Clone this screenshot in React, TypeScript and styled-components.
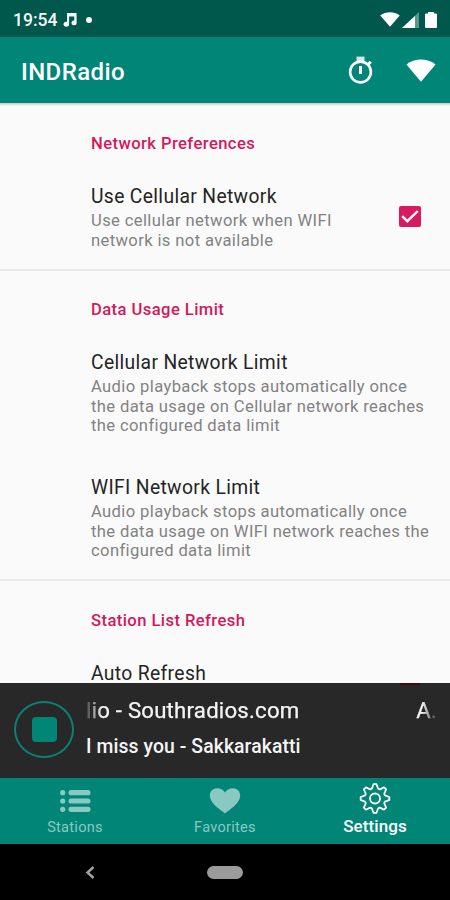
import React from "react";
import styled, { createGlobalStyle } from "styled-components";

const GlobalStyle = createGlobalStyle`
  * { box-sizing: border-box; }
  body { margin: 0; background: #000; font-family: Roboto, "Liberation Sans", sans-serif; }
`;

const Screen = styled.div`
  width: 450px;
  height: 900px;
  display: flex;
  flex-direction: column;
  overflow: hidden;
  background: #fafafa;
`;

const StatusBar = styled.header`
  height: 37px;
  flex: none;
  display: flex;
  align-items: center;
  padding: 2px 13px 0 13px;
  background: #00574b;
  color: #f4faf9;
`;

const Clock = styled.span`
  font-size: 17.5px;
  font-weight: 500;
  letter-spacing: 0;
  line-height: 20px;
  width: 50px;
`;

const StatusIcons = styled.div`
  margin-left: auto;
  display: flex;
  align-items: center;
`;

const NotificationDot = styled.span`
  width: 6px;
  height: 6px;
  margin-left: 9px;
  border-radius: 50%;
  background: #f4faf9;
`;

const AppBar = styled.div`
  height: 66px;
  flex: none;
  display: flex;
  align-items: center;
  padding: 2px 14px 0 21px;
  background: #018577;
  color: #fff;
`;

const AppTitle = styled.h1`
  margin: 0;
  flex: 1;
  padding-top: 1px;
  font-size: 24px;
  font-weight: 500;
  line-height: 30px;
  letter-spacing: 0.4px;
`;

const BarActions = styled.div`
  display: flex;
  align-items: center;
  gap: 33px;
  svg { display: block; margin-bottom: 2px; }
`;

const Preferences = styled.main`
  height: 580px;
  flex: none;
  overflow: hidden;
  background: linear-gradient(#bcc8c6, #fafafa 3px);
`;

const Section = styled.section<{ $height: number; $top?: number }>`
  height: ${(p) => p.$height}px;
  padding: ${(p) => p.$top ?? 29}px 18px 0 91px;
  border-bottom: 2px solid #e9e9e9;
`;

const SectionTitle = styled.h2`
  margin: 0 0 31px;
  font-size: 16.6px;
  font-weight: 500;
  line-height: 20px;
  letter-spacing: 0.42px;
  color: #d2195c;
`;

const Preference = styled.div`
  display: flex;
  align-items: center;
  justify-content: space-between;
  margin-bottom: 39.8px;
`;

const PreferenceTitle = styled.div`
  font-size: 19.3px;
  line-height: 24px;
  letter-spacing: 0.35px;
  color: #242424;
`;

const Summary = styled.div`
  margin-top: 2px;
  font-size: 16.6px;
  line-height: 19.7px;
  letter-spacing: 0.37px;
  color: #828282;
  white-space: nowrap;
`;

const Checkbox = styled.div`
  width: 22px;
  height: 21px;
  margin: 0 11px 2px 0;
  border-radius: 2px;
  background: #d81b60;
  display: flex;
`;

const Player = styled.section`
  height: 95px;
  flex: none;
  display: flex;
  align-items: center;
  padding: 0 0 2px 14px;
  background: #282828;
  color: #f5f5f5;
  position: relative;
`;

const CoveredCheckbox = styled.span`
  position: absolute;
  top: 0;
  left: 400px;
  width: 20px;
  height: 2px;
  background: #430612;
`;

const StopButton = styled.button`
  width: 60px;
  height: 57px;
  padding: 0;
  border: 2px solid #0b8074;
  border-radius: 50%;
  background: transparent;
  display: grid;
  place-items: center;
`;

const StopMark = styled.span`
  width: 25px;
  height: 25px;
  border-radius: 4px;
  background: #018577;
`;

const TrackInfo = styled.div`
  width: 351px;
  margin: -3px 0 0 12px;
  white-space: nowrap;
`;

const Marquee = styled.div`
  display: flex;
  justify-content: space-between;
  font-size: 22.2px;
  line-height: 28px;
  letter-spacing: 0.22px;
  -webkit-text-stroke: 0.25px currentColor;
  mask-image: linear-gradient(90deg, rgba(0, 0, 0, 0.15), #000 16px, #000 336px, rgba(0, 0, 0, 0.1));
`;

const TrackTitle = styled.div`
  margin-top: 9.5px;
  font-size: 19.4px;
  font-weight: 500;
  line-height: 26px;
  letter-spacing: 0.08px;
`;

const Tabs = styled.nav`
  height: 66px;
  flex: none;
  display: grid;
  grid-template-columns: repeat(3, 1fr);
  background: #018577;
`;

const Tab = styled.div<{ $active?: boolean }>`
  display: flex;
  flex-direction: column;
  align-items: center;
  padding-top: ${(p) => (p.$active ? 5 : 8)}px;
  color: ${(p) => (p.$active ? "#fff" : "#89c9c1")};
  svg { display: block; height: 31px; }
`;

const TabLabel = styled.span<{ $active?: boolean }>`
  font-size: ${(p) => (p.$active ? 17 : 14.5)}px;
  font-weight: ${(p) => (p.$active ? 500 : 400)};
  line-height: ${(p) => (p.$active ? 24 : 21)}px;
  letter-spacing: ${(p) => (p.$active ? 0.1 : 0.3)}px;
`;

const SystemBar = styled.footer`
  height: 56px;
  flex: none;
  display: grid;
  grid-template-columns: 180px 90px 180px;
  place-items: center;
  background: #000;
`;

const HomePill = styled.span`
  width: 36px;
  height: 13px;
  border-radius: 7px;
  background: #9b9b9b;
`;

const gearPath = () => {
  const point = (r: number, deg: number) => {
    const t = (deg * Math.PI) / 180;
    return `${(16 + r * Math.sin(t)).toFixed(2)} ${(15.5 - r * Math.cos(t)).toFixed(2)}`;
  };
  let d = "";
  for (let k = 0; k < 8; k++) {
    const a = k * 45;
    d += `${k ? "L" : "M"}${point(14.4, a - 6)} L${point(14.4, a + 6)} L${point(12.2, a + 11)} Q${point(8.4, a + 22.5)} ${point(12.2, a + 34)} `;
  }
  return d + "Z";
};

const Wifi = ({ width, height }: { width: number; height: number }) => (
  <svg width={width} height={height} viewBox="0 0 30 23" preserveAspectRatio="none" fill="#fff">
    <path d="M.4 5.4C8.8-1.3 21.2-1.3 29.6 5.4L15 22.8Z" />
  </svg>
);

export default function App() {
  return (
    <Screen>
      <GlobalStyle />
      <StatusBar>
        <Clock>19:54</Clock>
        <svg width="14" height="14" viewBox="0 0 14 14" fill="#f4faf9">
          <path d="M4 0H13.6V9.4A2.6 2.4 0 1 1 11.3 7.5V3.4H6.1V11.2A2.8 2.5 0 1 1 4 8.8Z" />
        </svg>
        <NotificationDot />
        <StatusIcons>
          <Wifi width={20} height={15} />
          <svg width="20" height="16" viewBox="0 0 20 16">
            <path d="M2 16L19 0V16Z" fill="#5d958d" />
            <path d="M2 16L15 4V16Z" fill="#fff" />
          </svg>
          <svg width="17" height="16" viewBox="0 0 17 16" fill="#fff">
            <path d="M8 0H14V1.5H16Q17 1.5 17 2.5V15Q17 16 16 16H6Q5 16 5 15V2.5Q5 1.5 6 1.5H8Z" />
          </svg>
        </StatusIcons>
      </StatusBar>
      <AppBar>
        <AppTitle>INDRadio</AppTitle>
        <BarActions>
          <svg width="25" height="28" viewBox="0 0 25 28" fill="none" stroke="#fff">
            <path d="M8.5 2.8H16.5" stroke="#d4e5e3" strokeWidth="4.4" />
            <circle cx="12.5" cy="16" r="10.4" strokeWidth="2.6" />
            <path d="M12.5 10V18M19.8 8.7L22.8 5.7" strokeWidth="3" />
          </svg>
          <Wifi width={30} height={23} />
        </BarActions>
      </AppBar>
      <Preferences>
        <Section $height={168} $top={31}>
          <SectionTitle>Network Preferences</SectionTitle>
          <Preference>
            <div>
              <PreferenceTitle>Use Cellular Network</PreferenceTitle>
              <Summary>Use cellular network when WIFI<br />network is not available</Summary>
            </div>
            <Checkbox>
              <svg width="22" height="21" viewBox="0 0 22 21" fill="none" stroke="#fff" strokeWidth="2.4">
                <path d="M3.2 10.2L8.3 15.2L18.8 5" />
              </svg>
            </Checkbox>
          </Preference>
        </Section>
        <Section $height={310}>
          <SectionTitle>Data Usage Limit</SectionTitle>
          <Preference>
            <div>
              <PreferenceTitle>Cellular Network Limit</PreferenceTitle>
              <Summary>Audio playback stops automatically once<br />the data usage on Cellular network reaches<br />the configured data limit</Summary>
            </div>
          </Preference>
          <Preference>
            <div>
              <PreferenceTitle>WIFI Network Limit</PreferenceTitle>
              <Summary>Audio playback stops automatically once<br />the data usage on WIFI network reaches the<br />configured data limit</Summary>
            </div>
          </Preference>
        </Section>
        <Section $height={120} $top={29.5}>
          <SectionTitle>Station List Refresh</SectionTitle>
          <PreferenceTitle>Auto Refresh</PreferenceTitle>
        </Section>
      </Preferences>
      <Player>
        <CoveredCheckbox />
        <StopButton aria-label="Stop"><StopMark /></StopButton>
        <TrackInfo>
          <Marquee><span>lio - Southradios.com</span><span>A.</span></Marquee>
          <TrackTitle>I miss you - Sakkarakatti</TrackTitle>
        </TrackInfo>
      </Player>
      <Tabs>
        <Tab>
          <svg width="32" height="31" viewBox="0 0 32 31" fill="currentColor">
            <circle cx="3.7" cy="6.7" r="2.6" /><circle cx="3.7" cy="15" r="2.6" /><circle cx="3.7" cy="23.3" r="2.6" />
            <rect x="9.5" y="4.1" width="22" height="5.2" rx="2.6" /><rect x="9.5" y="12.4" width="22" height="5.2" rx="2.6" /><rect x="9.5" y="20.7" width="22" height="5.2" rx="2.6" />
          </svg>
          <TabLabel>Stations</TabLabel>
        </Tab>
        <Tab>
          <svg width="32" height="31" viewBox="0 0 32 31" fill="currentColor">
            <path d="M16 27.5C11 23.5.8 17.5.8 9.6C.8 5.2 4 2.2 8.1 2.2C11.6 2.2 14.6 3.9 16 6.6C17.4 3.9 20.4 2.2 23.9 2.2C28 2.2 31.2 5.2 31.2 9.6C31.2 17.5 21 23.5 16 27.5Z" />
          </svg>
          <TabLabel>Favorites</TabLabel>
        </Tab>
        <Tab $active>
          <svg width="32" height="31" viewBox="0 0 32 31" fill="none" stroke="currentColor" strokeWidth="1.8" strokeLinejoin="round">
            <path d={gearPath()} />
            <circle cx="16" cy="15.5" r="5" />
          </svg>
          <TabLabel $active>Settings</TabLabel>
        </Tab>
      </Tabs>
      <SystemBar>
        <svg width="10" height="13" viewBox="0 0 10 13" fill="none" stroke="#a4a4a4" strokeWidth="2.4">
          <path d="M8.5 1L2.5 6.5L8.5 12" />
        </svg>
        <HomePill />
      </SystemBar>
    </Screen>
  );
}
